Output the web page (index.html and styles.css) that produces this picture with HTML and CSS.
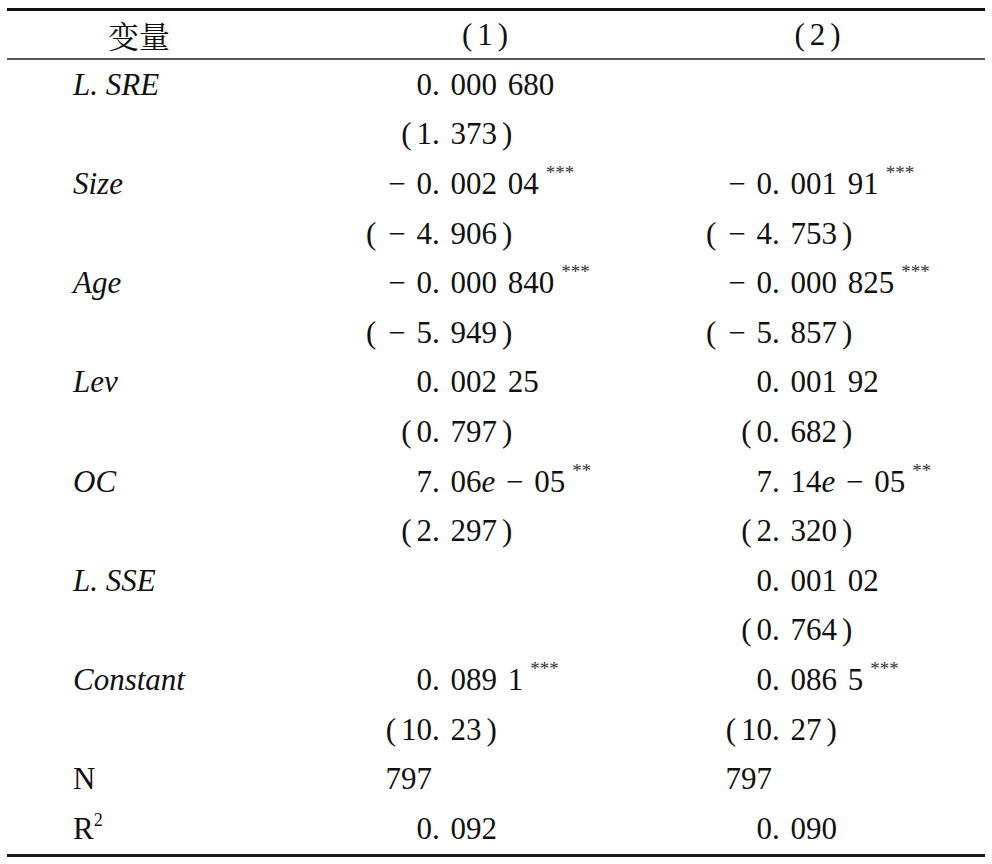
FILE: index.html
```html
<!DOCTYPE html>
<html lang="en">
<head>
<meta charset="utf-8">
<link rel="stylesheet" href="styles.css">
</head>
<body>
<div class="tbl">
  <div class="head">
    <div class="h0" lang="zh-CN">变量</div>
    <div class="h1"><span class="lp">(</span>1<span class="rp">)</span></div>
    <div class="h2"><span class="lp">(</span>2<span class="rp">)</span></div>
  </div>
  <div class="body">
    <div class="lab it"><span>L. SRE</span></div>
    <div class="v"><span class="i">0</span><span class="f">. 000 680</span></div>
    <div class="v"></div>

    <div class="lab"></div>
    <div class="v"><span class="i"><span class="lp">(</span>1</span><span class="f">. 373<span class="rp">)</span></span></div>
    <div class="v"></div>

    <div class="lab it"><span>Size</span></div>
    <div class="v"><span class="i">− 0</span><span class="f">. 002 04<sup>***</sup></span></div>
    <div class="v"><span class="i">− 0</span><span class="f">. 001 91<sup>***</sup></span></div>

    <div class="lab"></div>
    <div class="v"><span class="i"><span class="ln">(</span>− 4</span><span class="f">. 906<span class="rp">)</span></span></div>
    <div class="v"><span class="i"><span class="ln">(</span>− 4</span><span class="f">. 753<span class="rp">)</span></span></div>

    <div class="lab it"><span>Age</span></div>
    <div class="v"><span class="i">− 0</span><span class="f">. 000 840<sup>***</sup></span></div>
    <div class="v"><span class="i">− 0</span><span class="f">. 000 825<sup>***</sup></span></div>

    <div class="lab"></div>
    <div class="v"><span class="i"><span class="ln">(</span>− 5</span><span class="f">. 949<span class="rp">)</span></span></div>
    <div class="v"><span class="i"><span class="ln">(</span>− 5</span><span class="f">. 857<span class="rp">)</span></span></div>

    <div class="lab it"><span>Lev</span></div>
    <div class="v"><span class="i">0</span><span class="f">. 002 25</span></div>
    <div class="v"><span class="i">0</span><span class="f">. 001 92</span></div>

    <div class="lab"></div>
    <div class="v"><span class="i"><span class="lp">(</span>0</span><span class="f">. 797<span class="rp">)</span></span></div>
    <div class="v"><span class="i"><span class="lp">(</span>0</span><span class="f">. 682<span class="rp">)</span></span></div>

    <div class="lab it"><span>OC</span></div>
    <div class="v"><span class="i">7</span><span class="f">. 06<i>e</i> − 05<sup>**</sup></span></div>
    <div class="v"><span class="i">7</span><span class="f">. 14<i>e</i> − 05<sup>**</sup></span></div>

    <div class="lab"></div>
    <div class="v"><span class="i"><span class="lp">(</span>2</span><span class="f">. 297<span class="rp">)</span></span></div>
    <div class="v"><span class="i"><span class="lp">(</span>2</span><span class="f">. 320<span class="rp">)</span></span></div>

    <div class="lab it"><span>L. SSE</span></div>
    <div class="v"></div>
    <div class="v"><span class="i">0</span><span class="f">. 001 02</span></div>

    <div class="lab"></div>
    <div class="v"></div>
    <div class="v"><span class="i"><span class="lp">(</span>0</span><span class="f">. 764<span class="rp">)</span></span></div>

    <div class="lab it"><span>Constant</span></div>
    <div class="v"><span class="i">0</span><span class="f">. 089 1<sup>***</sup></span></div>
    <div class="v"><span class="i">0</span><span class="f">. 086 5<sup>***</sup></span></div>

    <div class="lab"></div>
    <div class="v"><span class="i"><span class="lp">(</span>10</span><span class="f">. 23<span class="rp">)</span></span></div>
    <div class="v"><span class="i"><span class="lp">(</span>10</span><span class="f">. 27<span class="rp">)</span></span></div>

    <div class="lab"><span>N</span></div>
    <div class="v"><span class="i">797</span><span class="f"></span></div>
    <div class="v"><span class="i">797</span><span class="f"></span></div>

    <div class="lab"><span>R<sup class="sq">2</sup></span></div>
    <div class="v"><span class="i">0</span><span class="f">. 092</span></div>
    <div class="v"><span class="i">0</span><span class="f">. 090</span></div>
  </div>
</div>
</body>
</html>
```

FILE: styles.css
```css
html, body {
  margin: 0;
  padding: 0;
  background: #ffffff;
}

body {
  font-family: "Liberation Serif";
}

.tbl {
  margin: 8px 0 0 7px;
  width: 978px;
  color: #111111;
  font-size: 31px;
  border-top: 3px solid #111111;
  border-bottom: 3px solid #1a1a1a;
}

.tbl span,
.tbl div,
.tbl sup,
.tbl i {
  font-family: "Liberation Serif";
}

.head {
  display: grid;
  grid-template-columns: 303px 340px 335px;
  height: 47px;
  align-items: center;
  border-bottom: 2px solid #555555;
}

.tbl .h0 {
  font-family: "Noto Serif CJK SC";
  text-align: center;
  padding-right: 39px;
  line-height: 47px;
}

.h1 {
  text-align: center;
  padding-left: 10px;
  line-height: 47px;
}

.h2 {
  text-align: center;
  line-height: 47px;
}

.body {
  display: grid;
  grid-template-columns: 303px 340px 335px;
  grid-auto-rows: 49.6px;
}

.lab {
  display: flex;
  align-items: center;
  padding-left: 66px;
  white-space: pre;
}

.it {
  font-style: italic;
}

.v {
  display: flex;
  align-items: center;
  white-space: pre;
  word-spacing: 3px;
}

.i {
  flex: none;
  width: 122px;
  text-align: right;
}

.f {
  flex: none;
}

.lp {
  margin-right: 5px;
}

.ln {
  margin-right: 12px;
}

.rp {
  margin-left: 5px;
}

.v sup {
  font-size: 19px;
  vertical-align: 15px;
  line-height: 0;
  margin-left: 7px;
  color: #333333;
  word-spacing: 0;
}

.sq {
  font-size: 18px;
  vertical-align: 13px;
  line-height: 0;
}
```
